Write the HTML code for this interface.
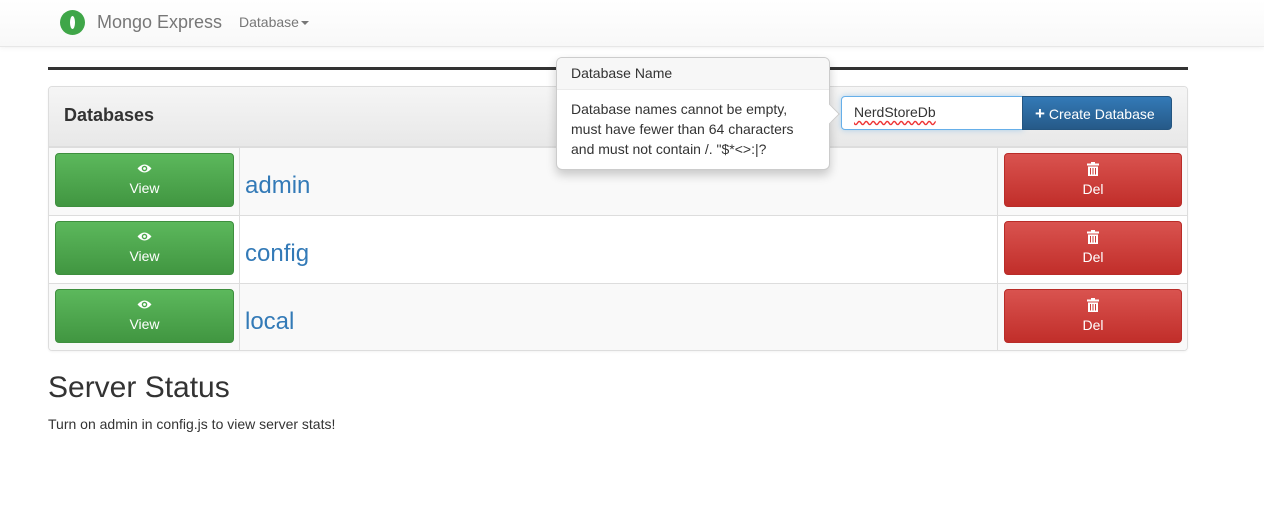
<!DOCTYPE html>
<html><head><style>
*{box-sizing:border-box}
body{margin:0;font-family:"Liberation Sans",sans-serif;font-size:14px;color:#333;background:#fff;width:1264px;height:513px;overflow:hidden;position:relative}
.nav{position:absolute;left:0;top:0;width:1264px;height:47px;background:linear-gradient(#fff,#f8f8f8);border-bottom:1px solid #e7e7e7;box-shadow:0 1px 5px rgba(0,0,0,.06)}
.logo{position:absolute;left:60px;top:10px;width:25px;height:25px;border-radius:50%;background:#3fa648}
.logo:after{content:"";position:absolute;left:10px;top:6px;width:5px;height:13px;border-radius:50%;background:#fff}
.brand{position:absolute;left:97px;top:12px;font-size:18px;color:#777}
.dd{position:absolute;left:239px;top:14px;font-size:14px;color:#777}
.caret{display:inline-block;border-top:4px solid #777;border-left:4px solid transparent;border-right:4px solid transparent;vertical-align:middle;margin-left:2px}
.hr{position:absolute;left:48px;top:67px;width:1140px;height:3px;background:#333}
.panel{position:absolute;left:48px;top:86px;width:1140px;height:265px;border:1px solid #ddd;border-radius:4px;box-shadow:0 1px 2px rgba(0,0,0,.05);overflow:hidden}
.ph{height:60px;background:linear-gradient(#f5f5f5,#e8e8e8);border-bottom:1px solid #ddd;position:relative}
.ph b{position:absolute;left:15px;top:18px;font-size:18px}
.row{position:relative;height:68px;border-top:1px solid #ddd;background:#f9f9f9}
.row.w{background:#fff}
.c1{position:absolute;left:0;top:0;width:191px;height:100%;border-right:1px solid #ddd}
.c3{position:absolute;left:948px;top:0;width:192px;height:100%;border-left:1px solid #ddd}
.btn{position:absolute;top:5px;height:54px;border-radius:4px;color:#fff;text-align:center;font-size:14px}
.g{left:6px;width:179px;background:linear-gradient(#5cb85c,#419641);border:1px solid #3e8f3e}
.r{left:6px;width:178px;background:linear-gradient(#d9534f,#c12e2a);border:1px solid #b92c28}
.btn svg{display:block;margin:8px auto 0}
.g svg{margin-top:9px}
.btn .t{display:block;margin-top:5px}
.g .t{margin-top:6px}
.name{position:absolute;left:196px;top:24px;font-size:24px;color:#337ab7}
.pop{position:absolute;left:556px;top:57px;width:274px;height:113px;background:#fff;border:1px solid #ccc;border-radius:6px;box-shadow:0 5px 10px rgba(0,0,0,.2);z-index:5}
.pop .pt{height:32px;background:#f7f7f7;border-bottom:1px solid #ebebeb;padding:7px 14px;border-radius:5px 5px 0 0}
.pop .pb{padding:9px 14px;line-height:20px}
.arr{position:absolute;right:-8px;top:49px;width:14px;height:14px;background:#fff;border-right:1px solid #ccc;border-top:1px solid #ccc;transform:rotate(45deg)}
.inp{position:absolute;left:841px;top:96px;width:182px;height:34px;border:1px solid #66afe9;border-radius:4px 0 0 4px;background:#fff;padding:7px 12px;box-shadow:0 0 6px rgba(102,175,233,.5)}
.inp span{text-decoration:underline wavy #e33;text-underline-offset:3px}
.cb{position:absolute;left:1022px;top:96px;width:150px;height:34px;border-radius:0 4px 4px 0;background:linear-gradient(#337ab7,#265a88);border:1px solid #245580;color:#fff;padding:7px 0 0 12px}
h1{position:absolute;left:48px;top:371px;margin:0;font-size:30px;font-weight:normal}
.st{position:absolute;left:48px;top:416px}
</style></head><body>
<div class="nav"><div class="logo"></div><div class="brand">Mongo Express</div><div class="dd">Database<span class="caret"></span></div></div>
<div class="hr"></div>
<div class="panel">
<div class="ph"><b>Databases</b></div>
<div class="row"><div class="c1"><div class="btn g"><svg width="15" height="11" viewBox="0 0 14 10"><path d="M0.5 5Q7-2.5 13.5 5Q7 12.5 0.5 5Z" fill="#fff"/><circle cx="7" cy="5" r="2.6" fill="#4ca84c"/><circle cx="7" cy="5" r="1.3" fill="#fff"/></svg><span class="t">View</span></div></div><div class="name">admin</div><div class="c3"><div class="btn r"><svg width="12" height="14" viewBox="0 0 12 14"><path d="M4 0h4v1.5h4v2H0v-2h4z M1 4.5h10v9.5H1z" fill="#fff"/><path d="M3.5 6v6.5M6 6v6.5M8.5 6v6.5" stroke="#cc3c38" stroke-width="1"/></svg><span class="t">Del</span></div></div></div>
<div class="row w"><div class="c1"><div class="btn g"><svg width="15" height="11" viewBox="0 0 14 10"><path d="M0.5 5Q7-2.5 13.5 5Q7 12.5 0.5 5Z" fill="#fff"/><circle cx="7" cy="5" r="2.6" fill="#4ca84c"/><circle cx="7" cy="5" r="1.3" fill="#fff"/></svg><span class="t">View</span></div></div><div class="name">config</div><div class="c3"><div class="btn r"><svg width="12" height="14" viewBox="0 0 12 14"><path d="M4 0h4v1.5h4v2H0v-2h4z M1 4.5h10v9.5H1z" fill="#fff"/><path d="M3.5 6v6.5M6 6v6.5M8.5 6v6.5" stroke="#cc3c38" stroke-width="1"/></svg><span class="t">Del</span></div></div></div>
<div class="row" style="height:67px"><div class="c1"><div class="btn g"><svg width="15" height="11" viewBox="0 0 14 10"><path d="M0.5 5Q7-2.5 13.5 5Q7 12.5 0.5 5Z" fill="#fff"/><circle cx="7" cy="5" r="2.6" fill="#4ca84c"/><circle cx="7" cy="5" r="1.3" fill="#fff"/></svg><span class="t">View</span></div></div><div class="name">local</div><div class="c3"><div class="btn r"><svg width="12" height="14" viewBox="0 0 12 14"><path d="M4 0h4v1.5h4v2H0v-2h4z M1 4.5h10v9.5H1z" fill="#fff"/><path d="M3.5 6v6.5M6 6v6.5M8.5 6v6.5" stroke="#cc3c38" stroke-width="1"/></svg><span class="t">Del</span></div></div></div>
</div>
<div class="inp"><span>NerdStoreDb</span></div>
<div class="cb"><b style="font-size:17px">+</b> Create Database</div>
<div class="pop"><div class="arr"></div><div class="pt">Database Name</div><div class="pb">Database names cannot be empty, must have fewer than 64 characters and must not contain /. "$*&lt;&gt;:|?</div></div>
<h1>Server Status</h1>
<div class="st">Turn on admin in config.js to view server stats!</div>
</body></html>
